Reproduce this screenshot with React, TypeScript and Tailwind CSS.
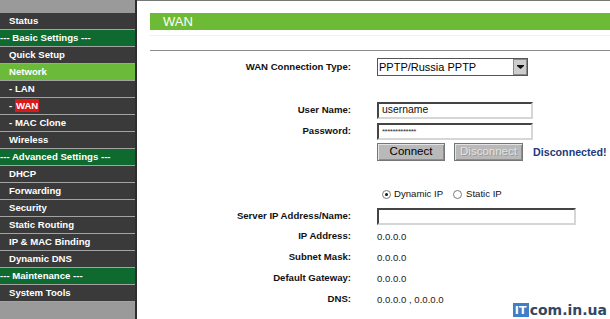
import React from 'react';

type Kind = 'item' | 'section' | 'active' | 'sub' | 'subActive';

const NAV: { label: string; kind: Kind }[] = [
  { label: 'Status', kind: 'item' },
  { label: 'Basic Settings', kind: 'section' },
  { label: 'Quick Setup', kind: 'item' },
  { label: 'Network', kind: 'active' },
  { label: 'LAN', kind: 'sub' },
  { label: 'WAN', kind: 'subActive' },
  { label: 'MAC Clone', kind: 'sub' },
  { label: 'Wireless', kind: 'item' },
  { label: 'Advanced Settings', kind: 'section' },
  { label: 'DHCP', kind: 'item' },
  { label: 'Forwarding', kind: 'item' },
  { label: 'Security', kind: 'item' },
  { label: 'Static Routing', kind: 'item' },
  { label: 'IP & MAC Binding', kind: 'item' },
  { label: 'Dynamic DNS', kind: 'item' },
  { label: 'Maintenance', kind: 'section' },
  { label: 'System Tools', kind: 'item' },
];

const Sidebar: React.FC = () => (
  <div className="w-[137px] h-[319px] shrink-0 flex flex-col bg-[#9a9a9a] border-r-2 border-[#2e2e2e]">
    <div className="h-[13px] shrink-0" />
    {NAV.map((n) => {
      const bg =
        n.kind === 'section' ? 'bg-[#0f6a30]' : n.kind === 'active' ? 'bg-[#6cba3a]' : 'bg-[#3a3a3a]';
      return (
        <div
          key={n.label}
          className={`h-[17px] shrink-0 flex items-center border-b border-[#a3a3a3] text-white font-bold text-[9.6px] leading-none whitespace-nowrap ${bg} ${
            n.kind === 'section' ? 'pl-0' : 'pl-[9px]'
          }`}
        >
          {n.kind === 'section' && <span>--- {n.label} ---</span>}
          {(n.kind === 'item' || n.kind === 'active') && <span>{n.label}</span>}
          {n.kind === 'sub' && <span>- {n.label}</span>}
          {n.kind === 'subActive' && (
            <span>
              - <span className="bg-[#d91a1a] px-[1px] py-[1px]">{n.label}</span>
            </span>
          )}
        </div>
      );
    })}
    <div className="flex-1" />
  </div>
);

const Label: React.FC<{ children: React.ReactNode }> = ({ children }) => (
  <div className="w-[201px] shrink-0 text-right font-bold text-[9.6px] text-[#111]">{children}</div>
);

const inset =
  'border-2 border-t-[#444] border-l-[#444] border-b-[#d6d6d6] border-r-[#d6d6d6] bg-white';

const button =
  'h-[18px] flex items-center justify-center bg-[#b9b9b9] border border-[#767676] shadow-[inset_1px_1px_0_#e4e4e4,inset_-1px_-1px_0_#8e8e8e] text-[11.5px] leading-none';

const Radio: React.FC<{ checked?: boolean }> = ({ checked }) => (
  <span className="w-[9px] h-[9px] rounded-full border border-[#7a7a7a] bg-white flex items-center justify-center shrink-0">
    {checked && <span className="w-[3px] h-[3px] rounded-full bg-[#111]" />}
  </span>
);

const App: React.FC = () => {
  const values = [
    { label: 'IP Address:', value: '0.0.0.0' },
    { label: 'Subnet Mask:', value: '0.0.0.0' },
    { label: 'Default Gateway:', value: '0.0.0.0' },
    { label: 'DNS:', value: '0.0.0.0 , 0.0.0.0' },
  ];

  return (
    <div className="w-[610px] h-[319px] overflow-hidden flex bg-white font-['Liberation_Sans',Arial,sans-serif]">
      <Sidebar />

      <div className="relative flex-1 flex flex-col border-t border-[#777] pl-[13px]">
        <div className="h-[12px] shrink-0" />
        {/* Title bar */}
        <div className="h-[17px] shrink-0 bg-[#6cba36] flex items-center pl-[13px] text-white text-[13px] leading-none">
          WAN
        </div>
        <div className="h-[6px] shrink-0 border-b border-[#f0f0f0]" />
        <div className="h-[15px] shrink-0 border-b border-[#8c8c8c]" />

        <div className="h-[7px] shrink-0" />
        {/* Connection type */}
        <div className="h-[18px] shrink-0 flex items-center gap-[26px]">
          <Label>WAN Connection Type:</Label>
          <div className="w-[151px] h-[18px] flex border border-[#555] bg-white">
            <div className="flex-1 flex items-center pl-[1px] text-[11px] text-black leading-none">PPTP/Russia PPTP</div>
            <div className="w-[14px] h-full bg-[#cdcdcd] border border-[#8a8a8a] flex items-center justify-center">
              <svg width="7" height="4" viewBox="0 0 7 4">
                <path d="M0 0H7V1L3.5 4L0 1Z" fill="#111" />
              </svg>
            </div>
          </div>
        </div>

        <div className="h-[26px] shrink-0" />
        {/* Login */}
        <div className="h-[17px] shrink-0 flex items-center gap-[26px]">
          <Label>User Name:</Label>
          <div className={`w-[156px] h-[17px] flex items-center pl-[3px] text-[10.4px] text-[#111] leading-none ${inset}`}>
            username
          </div>
        </div>
        <div className="h-[4px] shrink-0" />
        <div className="h-[17px] shrink-0 flex items-center gap-[26px]">
          <Label>Password:</Label>
          <div className={`w-[156px] h-[17px] flex items-center pl-[3px] text-[8px] text-[#333] leading-none tracking-[-0.5px] ${inset}`}>
            *************
          </div>
        </div>
        <div className="h-[3px] shrink-0" />
        {/* Buttons */}
        <div className="h-[18px] shrink-0 flex items-center">
          <div className="w-[227px] shrink-0" />
          <div className={`w-[68px] text-black ${button}`}>Connect</div>
          <div className="w-[9px]" />
          <div className={`w-[69px] text-[#e2e2e2] [text-shadow:1px_1px_0_#9a9a9a] ${button}`}>Disconnect</div>
          <div className="w-[10px]" />
          <div className="font-bold text-[10.7px] text-[#1d3a7c] leading-none">Disconnected!</div>
        </div>

        <div className="h-[26px] shrink-0" />
        {/* IP type */}
        <div className="h-[14px] shrink-0 flex items-center text-[9.6px] text-[#111] leading-none">
          <div className="w-[232px] shrink-0" />
          <Radio checked />
          <span className="ml-[3px]">Dynamic IP</span>
          <span className="w-[10px]" />
          <Radio />
          <span className="ml-[4px]">Static IP</span>
        </div>

        <div className="h-[7px] shrink-0" />
        <div className="h-[16px] shrink-0 flex items-center gap-[26px]">
          <Label>Server IP Address/Name:</Label>
          <div className={`w-[199px] h-[17px] ${inset}`} />
        </div>

        <div className="h-[2px] shrink-0" />
        {values.map((v) => (
          <div key={v.label} className="h-[21px] shrink-0 flex items-center gap-[26px]">
            <Label>{v.label}</Label>
            <div className="text-[9.6px] text-[#222] leading-none">{v.value}</div>
          </div>
        ))}

        {/* Watermark */}
        <div className="absolute right-[3px] bottom-[2px] flex items-center font-['DejaVu_Sans',sans-serif]">
          <span className="w-[16px] h-[14px] bg-[#3e80c8] text-white text-[11px] font-bold leading-none flex items-center justify-center">
            IT
          </span>
          <span className="text-[14px] font-bold text-[#33475e] leading-none ml-[1px]">com.in.ua</span>
        </div>
      </div>
    </div>
  );
};

export default App;
